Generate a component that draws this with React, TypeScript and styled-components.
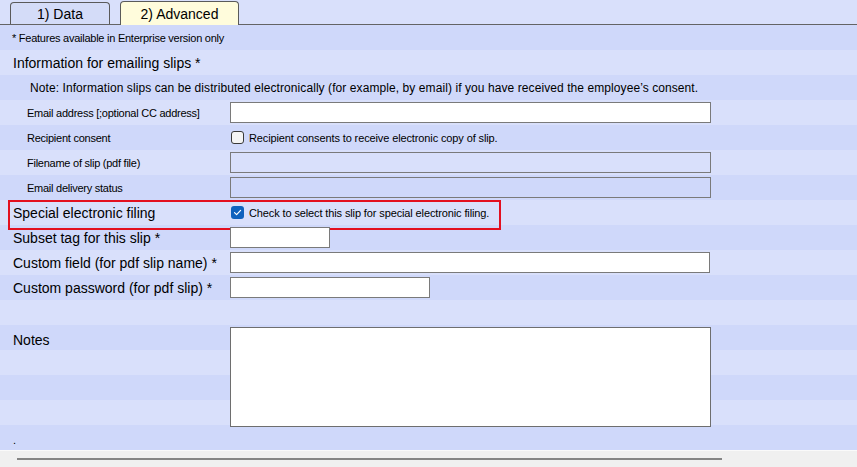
import React from 'react';
import styled, { createGlobalStyle, css } from 'styled-components';

const LIGHT = '#d9e0fb';
const DARK = '#cfd8fa';

const GlobalStyle = createGlobalStyle`
  html, body { margin: 0; padding: 0; }
  body {
    width: 857px;
    height: 467px;
    overflow: hidden;
    background: ${LIGHT};
    font-family: "Liberation Sans", Arial, sans-serif;
    color: #000;
  }
  * { box-sizing: border-box; }
`;

const Page = styled.div`
  width: 857px;
  height: 467px;
  display: flex;
  flex-direction: column;
`;

const TabStrip = styled.div`
  height: 25px;
  flex: none;
  display: flex;
  align-items: flex-end;
  gap: 10px;
  padding-left: 10px;
  background: ${LIGHT};
  border-bottom: 1px solid #646464;
`;

const Tab = styled.div<{ $active?: boolean; $w: number }>`
  width: ${p => p.$w}px;
  height: 22px;
  border: 1px solid #5a5a5a;
  border-bottom: none;
  border-radius: 4px 4px 0 0;
  background: #d4dcf8;
  display: flex;
  align-items: center;
  justify-content: center;
  font-size: 14px;
  padding-top: 1px;
  ${p =>
    p.$active &&
    css`
      height: 24px;
      margin-bottom: -1px;
      background: #fffcdc;
      position: relative;
      z-index: 1;
    `}
`;

const Form = styled.div`
  height: 425px;
  flex: none;
  display: flex;
  flex-direction: column;
  background: repeating-linear-gradient(
    to bottom,
    ${DARK} 0px,
    ${DARK} 25px,
    ${LIGHT} 25px,
    ${LIGHT} 50px
  );
`;

const Row = styled.div<{ $highlight?: boolean }>`
  height: 25px;
  flex: none;
  display: grid;
  grid-template-columns: 230px 481px;
  align-items: center;
  position: relative;
  ${p =>
    p.$highlight &&
    css`
      &::after {
        content: '';
        position: absolute;
        left: 8px;
        top: 0;
        width: 489px;
        height: 26px;
        border: 2px solid #e3101f;
        pointer-events: none;
      }
    `}
`;

const WideText = styled.div<{ $indent: number; $size: 'small' | 'note' }>`
  grid-column: 1 / -1;
  padding-left: ${p => p.$indent}px;
  white-space: nowrap;
  ${p =>
    p.$size === 'small'
      ? css`
          font-size: 11px;
          letter-spacing: -0.25px;
        `
      : css`
          font-size: 12px;
          letter-spacing: 0.08px;
        `}
`;

const Label = styled.div<{ $small?: boolean }>`
  white-space: nowrap;
  ${p =>
    p.$small
      ? css`
          padding-left: 27px;
          font-size: 11px;
          letter-spacing: -0.25px;
        `
      : css`
          padding-left: 13px;
          font-size: 14px;
        `}
`;

const TextBox = styled.div<{ $w?: number; $disabled?: boolean }>`
  width: ${p => p.$w ?? 481}px;
  height: 21px;
  border: 1px solid #7a7a7a;
  background: ${p => (p.$disabled ? 'transparent' : '#fff')};
`;

const CheckLine = styled.label`
  display: flex;
  align-items: center;
  gap: 5px;
  padding-left: 1px;
  font-size: 11px;
  letter-spacing: -0.12px;
  white-space: nowrap;
`;

const Box = styled.span<{ $checked?: boolean }>`
  width: 13px;
  height: 13px;
  flex: none;
  border-radius: 3px;
  display: flex;
  align-items: center;
  justify-content: center;
  ${p =>
    p.$checked
      ? css`
          background: #0f62be;
        `
      : css`
          background: #f4f4f4;
          border: 1px solid #3a3a3a;
        `}
`;

const NotesRow = styled.div`
  height: 100px;
  flex: none;
  display: grid;
  grid-template-columns: 230px 481px;
  align-items: start;
`;

const NotesLabel = styled.div`
  padding: 3px 0 0 13px;
  font-size: 14px;
  line-height: 25px;
`;

const NotesBox = styled.div`
  margin-top: 2px;
  height: 100px;
  border: 1px solid #6e6e6e;
  background: #fff;
`;

const DotRow = styled.div`
  height: 25px;
  flex: none;
  padding-left: 13px;
  display: flex;
  align-items: flex-end;
  font-size: 11px;
  line-height: 11px;
  padding-bottom: 4px;
`;

const BottomBar = styled.div`
  height: 17px;
  flex: none;
  background: #f0f0f0;
  border-top: 1px solid #fafafa;
  padding: 7px 0 0 17px;
`;

const Thumb = styled.div`
  width: 705px;
  height: 2px;
  background: #858585;
`;

const Check = () => (
  <svg width="9" height="9" viewBox="0 0 9 9">
    <path d="M1.5 4.6 L3.6 6.6 L7.6 2.4" fill="none" stroke="#fff" strokeWidth="1.2" strokeLinecap="round" strokeLinejoin="round" />
  </svg>
);

export default function App() {
  return (
    <Page>
      <GlobalStyle />
      <TabStrip>
        <Tab $w={100}>1) Data</Tab>
        <Tab $w={119} $active>2) Advanced</Tab>
      </TabStrip>
      <Form>
        <Row>
          <WideText $indent={12} $size="small">* Features available in Enterprise version only</WideText>
        </Row>
        <Row>
          <Label>Information for emailing slips *</Label>
        </Row>
        <Row>
          <WideText $indent={30} $size="note">
            Note: Information slips can be distributed electronically (for example, by email) if you have received the employee’s consent.
          </WideText>
        </Row>
        <Row>
          <Label $small>Email address [;optional CC address]</Label>
          <TextBox />
        </Row>
        <Row>
          <Label $small>Recipient consent</Label>
          <CheckLine>
            <Box />
            Recipient consents to receive electronic copy of slip.
          </CheckLine>
        </Row>
        <Row>
          <Label $small>Filename of slip (pdf file)</Label>
          <TextBox $disabled />
        </Row>
        <Row>
          <Label $small>Email delivery status</Label>
          <TextBox $disabled />
        </Row>
        <Row $highlight>
          <Label>Special electronic filing</Label>
          <CheckLine>
            <Box $checked>
              <Check />
            </Box>
            Check to select this slip for special electronic filing.
          </CheckLine>
        </Row>
        <Row>
          <Label>Subset tag for this slip *</Label>
          <TextBox $w={100} />
        </Row>
        <Row>
          <Label>Custom field (for pdf slip name) *</Label>
          <TextBox $w={480} />
        </Row>
        <Row>
          <Label>Custom password (for pdf slip) *</Label>
          <TextBox $w={200} />
        </Row>
        <Row />
        <NotesRow>
          <NotesLabel>Notes</NotesLabel>
          <NotesBox />
        </NotesRow>
        <DotRow>.</DotRow>
      </Form>
      <BottomBar>
        <Thumb />
      </BottomBar>
    </Page>
  );
}
